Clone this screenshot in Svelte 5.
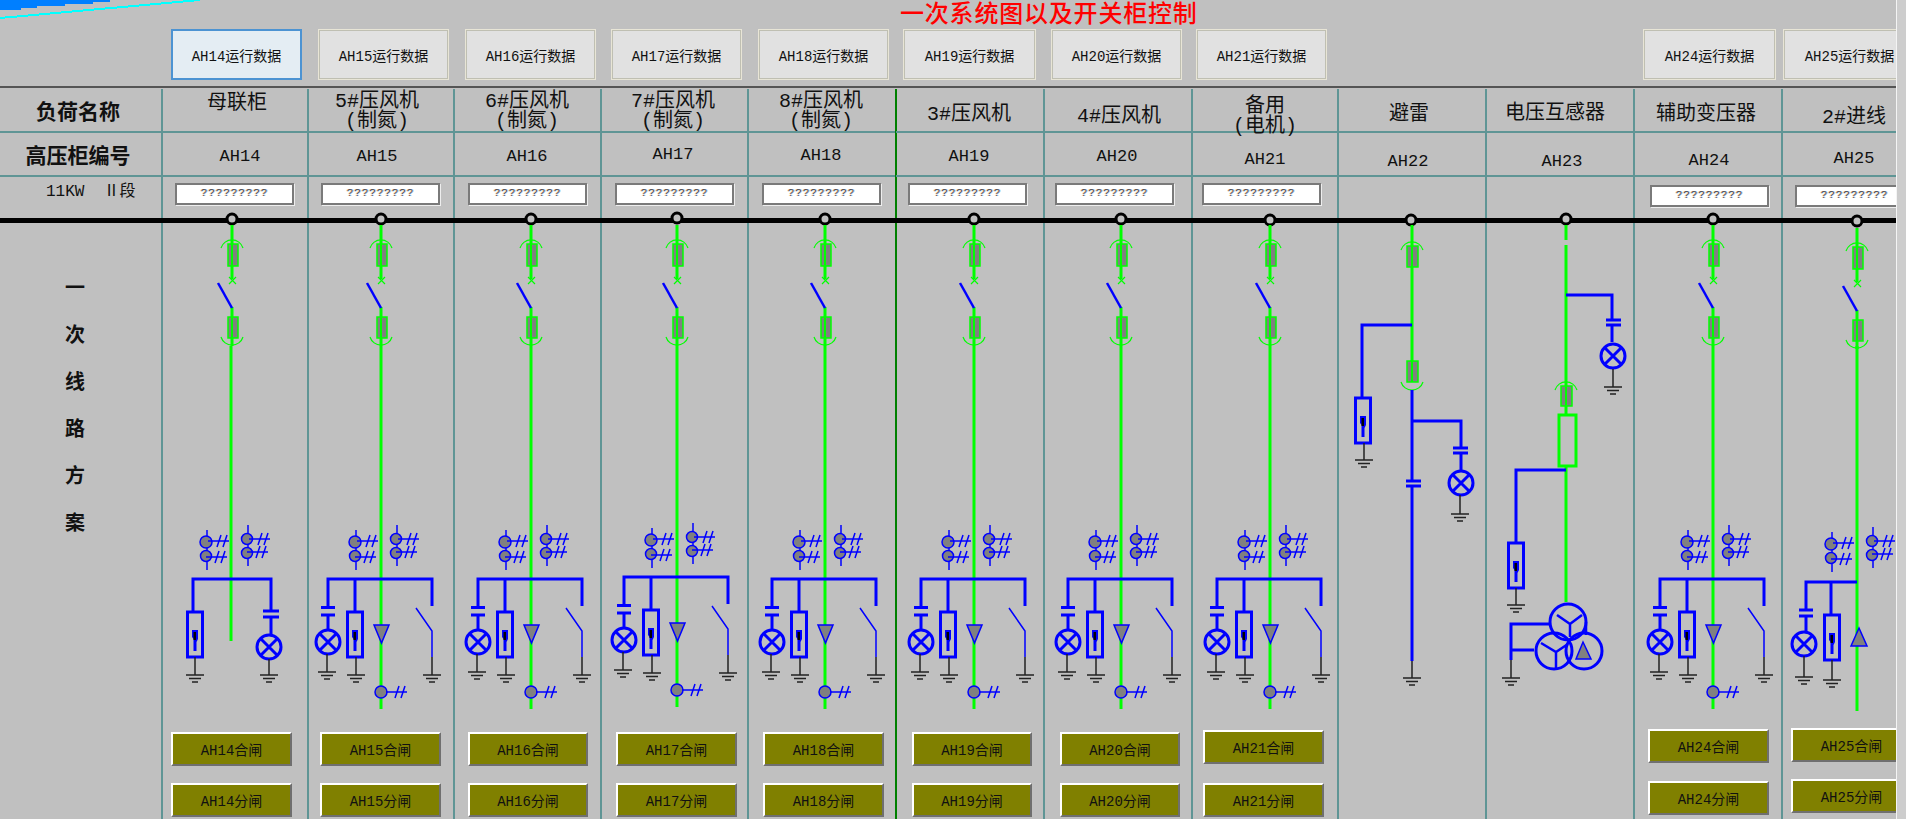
<script>
	// x = left edge of the column, all other positions are taken from the reference
	const rawCols = [
		{ id: 'AH14', x: 162, name: ['母联柜'], nameX: 237, nameY: 102, noX: 240, noY: 155, btn: 171, btnW: 131, box: 175, boxY: 183, ctl: 171, ctlW: 121, y1: 732, y2: 783 },
		{ id: 'AH15', x: 308, name: ['5#压风机', '(制氮)'], nameX: 377, nameY: 110, noX: 377, noY: 155, btn: 318, btnW: 131, box: 321, boxY: 183, ctl: 320, ctlW: 121, y1: 732, y2: 783 },
		{ id: 'AH16', x: 454, name: ['6#压风机', '(制氮)'], nameX: 527, nameY: 110, noX: 527, noY: 155, btn: 465, btnW: 131, box: 468, boxY: 183, ctl: 468, ctlW: 120, y1: 732, y2: 783 },
		{ id: 'AH17', x: 601, name: ['7#压风机', '(制氮)'], nameX: 673, nameY: 110, noX: 673, noY: 153, btn: 611, btnW: 131, box: 615, boxY: 183, ctl: 616, ctlW: 121, y1: 732, y2: 783 },
		{ id: 'AH18', x: 748, name: ['8#压风机', '(制氮)'], nameX: 821, nameY: 110, noX: 821, noY: 154, btn: 758, btnW: 131, box: 762, boxY: 183, ctl: 763, ctlW: 121, y1: 732, y2: 783 },
		{ id: 'AH19', x: 896, name: ['3#压风机'], nameX: 969, nameY: 113, noX: 969, noY: 155, btn: 903, btnW: 133, box: 908, boxY: 183, ctl: 912, ctlW: 120, y1: 732, y2: 783 },
		{ id: 'AH20', x: 1044, name: ['4#压风机'], nameX: 1119, nameY: 115, noX: 1117, noY: 155, btn: 1051, btnW: 131, box: 1055, boxY: 183, ctl: 1060, ctlW: 120, y1: 732, y2: 783 },
		{ id: 'AH21', x: 1192, name: ['备用', '(电机)'], nameX: 1265, nameY: 115, noX: 1265, noY: 158, btn: 1196, btnW: 131, box: 1202, boxY: 183, ctl: 1203, ctlW: 121, y1: 730, y2: 783 },
		{ id: 'AH22', x: 1338, name: ['避雷'], nameX: 1409, nameY: 113, noX: 1408, noY: 160 },
		{ id: 'AH23', x: 1486, name: ['电压互感器'], nameX: 1555, nameY: 112, noX: 1562, noY: 160 },
		{ id: 'AH24', x: 1634, name: ['辅助变压器'], nameX: 1706, nameY: 113, noX: 1709, noY: 159, btn: 1643, btnW: 133, box: 1650, boxY: 185, ctl: 1648, ctlW: 121, y1: 729, y2: 781 },
		{ id: 'AH25', x: 1782, name: ['2#进线'], nameX: 1854, nameY: 116, noX: 1854, noY: 157, btn: 1783, btnW: 133, box: 1795, boxY: 185, ctl: 1791, ctlW: 121, y1: 728, y2: 779 }
	];

	const cols = rawCols.map((c, i) => ({
		...c,
		w: (rawCols[i + 1] ? rawCols[i + 1].x : 1896) - c.x
	}));
	const gridCols = `162px ${cols.map((c) => c.w + 'px').join(' ')}`;

	// standard feeder cabinets, main = x of the busbar drop
	const feeders = [
		{ main: 381, cy: 219, dy: 0 },
		{ main: 531, cy: 219, dy: 0 },
		{ main: 677, cy: 218, dy: -2 },
		{ main: 825, cy: 219, dy: 0 },
		{ main: 974, cy: 219, dy: 0 },
		{ main: 1121, cy: 219, dy: 0 },
		{ main: 1270, cy: 220, dy: 0 },
		{ main: 1713, cy: 219, dy: 0 }
	];

	const planChars = ['一', '次', '线', '路', '方', '案'];
</script>

<div class="page">
	<div class="sheet">
		<header class="top">
			<h1 class="title">一次系统图以及开关柜控制</h1>
			<div class="run-row" style="grid-template-columns: {gridCols}">
				<div></div>
				{#each cols as c, i}
					<div>
						{#if c.btn}
							<button
								class="run-btn"
								class:active={i === 0}
								style="margin-left: {c.btn - c.x}px; width: {c.btnW}px"
							>{c.id}运行数据</button>
						{/if}
					</div>
				{/each}
			</div>
		</header>

		<div class="table" style="grid-template-columns: {gridCols}">
			<section class="col head-col">
				<div class="cell name-cell"><strong>负荷名称</strong></div>
				<div class="cell no-cell"><strong>高压柜编号</strong></div>
				<div class="segment">11KW&nbsp;&nbsp;Ⅱ段</div>
				<div class="plan">
					{#each planChars as ch}
						<span>{ch}</span>
					{/each}
				</div>
			</section>

			{#each cols as c}
				<section class="col" class:green-line={c.id === 'AH19'}>
					<div class="cell name-cell">
						<div
							class="name"
							style="margin-left: {2 * (c.nameX - c.x) - c.w}px; margin-top: {2 * (c.nameY - 108)}px"
						>
							{#each c.name as line}
								<div>{line}</div>
							{/each}
						</div>
					</div>
					<div class="cell no-cell">
						<span
							class="no"
							style="margin-left: {2 * (c.noX - c.x) - c.w}px; margin-top: {2 * (c.noY - 153)}px"
						>{c.id}</span>
					</div>
					<div class="box-cell">
						{#if c.box}
							<div class="box" style="margin-left: {c.box - c.x}px; margin-top: {c.boxY - 177}px">?????????</div>
						{/if}
					</div>
					{#if c.ctl}
						<div
							class="ctrl"
							style="padding-left: {c.ctl - c.x}px; gap: {c.y2 - c.y1 - 34}px; padding-bottom: {819 - c.y2 - 34}px"
						>
							<button class="ctl-btn" style="width: {c.ctlW}px">{c.id}合闸</button>
							<button class="ctl-btn" style="width: {c.ctlW}px">{c.id}分闸</button>
						</div>
					{/if}
				</section>
			{/each}
		</div>

		<!-- the wiring is a free canvas on top of the table -->
		<svg class="wiring" width="1896" height="819" viewBox="0 0 1896 819">
			<defs>
				<g id="ground">
					<path class="earth" d="M-9 0H9M-6 3.5H6M-3 7H3" />
				</g>
				<g id="lamp">
					<circle class="blue" r="12" />
					<path class="blue" d="M-8 -8L8 8M8 -8L-8 8" />
				</g>
				<g id="tail">
					<path class="thin" d="M0 0H21M9 6L13 -6M15 6L19 -6" />
				</g>
				<g id="arrester">
					<rect class="blue" x="-7.5" y="0" width="15" height="45" />
					<path d="M-3 18H3V27L1.5 30V39H-1.5V27L-3 25Z" fill="#0000ff" />
					<rect x="-1.5" y="20" width="2.5" height="8" fill="#000" />
				</g>
				<g id="head">
					<path class="green" d="M0 225V279M0 307V346" />
					<rect class="fuse" x="-4" y="244" width="10" height="22" />
					<path class="green-thin" d="M0 244V266" />
					<path class="green-arc" d="M-11 248A11.5 11.5 0 0 1 11 248" />
					<path class="green-arc" d="M-3 277L4 284M4 277L-3 284" />
					<rect class="fuse" x="-4" y="317" width="10" height="21" />
					<path class="green-thin" d="M0 317V338" />
					<path class="green-arc" d="M-11 337A11.5 11.5 0 0 0 11 337" />
					<path class="blue-blade" d="M-14 283L0 308" />
				</g>
				<g id="cts">
					<path class="thin" d="M-25 530V570M16 525V566" />
					<circle class="bulb" cx="-26" cy="542" r="6" />
					<circle class="bulb" cx="-26" cy="556" r="5.5" />
					<circle class="bulb" cx="15" cy="539" r="5.5" />
					<circle class="bulb" cx="15" cy="553" r="5.5" />
					<use href="#tail" x="-24" y="541" />
					<use href="#tail" x="-26" y="557" />
					<use href="#tail" x="17" y="539" />
					<use href="#tail" x="15" y="552" />
				</g>
				<g id="lower">
					<path class="blue" d="M-53 607V579H51V606" />
					<path class="blue" d="M-26 579V612M-60 607.5H-46M-60 615H-46M-53 615V630" />
					<use href="#lamp" x="-53" y="642" />
					<path class="earth" d="M-54 654V672" />
					<use href="#ground" x="-54" y="672" />
					<use href="#arrester" x="-26" y="612" />
					<path class="earth" d="M-25 657V675" />
					<use href="#ground" x="-25" y="675" />
					<path class="tri" d="M-7 625H8L0.5 643Z" />
					<path class="thin" d="M35 608L51 631V657" />
					<path class="earth" d="M51 657V675" />
					<use href="#ground" x="51" y="675" />
				</g>
			</defs>

			<path class="corner" d="M0 0H110V2H93V4H65V6H37V8H21V10H0Z" />
			<path class="cyan" d="M0 18L200 0" />

			<rect x="0" y="218" width="1896" height="5" fill="#000" />

			{#each feeders as f}
				<circle class="node" cx={f.main} cy={f.cy} r="5" />
				<use href="#head" x={f.main} y="0" />
				<use href="#cts" x={f.main} y={f.dy} />
				<path class="green" d="M{f.main} 346V{709 + f.dy}" />
				<use href="#lower" x={f.main} y={f.dy} />
				<circle class="bulb" cx={f.main} cy={692 + f.dy} r="6" />
				<use href="#tail" x={f.main + 5} y={692 + f.dy} />
			{/each}

			<!-- AH14 -->
			<circle class="node" cx="232" cy="219" r="5" />
			<use href="#head" x="232" y="0" />
			<use href="#cts" x="232" y="0" />
			<path class="green" d="M231 346V641" />
			<path class="blue" d="M193 612V579H271V611M263 611H279M263 617H279M271 617V635" />
			<use href="#arrester" x="195" y="612" />
			<path class="earth" d="M195 657V675" />
			<use href="#ground" x="195" y="675" />
			<use href="#lamp" x="269" y="647" />
			<path class="earth" d="M269 659V675" />
			<use href="#ground" x="269" y="675" />

			<!-- AH22 lightning arrester -->
			<circle class="node" cx="1411" cy="220" r="5" />
			<path class="green" d="M1412 225V361" />
			<rect class="fuse" x="1407" y="246" width="11" height="21" />
			<path class="green-thin" d="M1412 246V267" />
			<path class="green-arc" d="M1401 250A11.5 11.5 0 0 1 1423 250" />
			<rect class="fuse" x="1407" y="361" width="11" height="21" />
			<path class="green-thin" d="M1412 361V382" />
			<path class="green-arc" d="M1401 382A11.5 11.5 0 0 0 1423 382" />
			<path class="blue" d="M1412 325H1362V398M1412 390V481M1412 486V661M1406 481H1421M1406 486H1421" />
			<use href="#arrester" x="1363" y="398" />
			<path class="earth" d="M1364 443V460" />
			<use href="#ground" x="1364" y="460" />
			<path class="earth" d="M1412 661V678" />
			<use href="#ground" x="1412" y="678" />
			<path class="blue" d="M1412 421H1461V448M1453 448H1468M1453 453H1468M1461 453V470" />
			<use href="#lamp" x="1461" y="483" />
			<path class="earth" d="M1460 495V514" />
			<use href="#ground" x="1460" y="514" />

			<!-- AH23 voltage transformer -->
			<circle class="node" cx="1566" cy="219" r="5" />
			<path class="green" d="M1566 225V240M1566 245V415M1566 466V602" />
			<rect class="fuse" x="1561" y="386" width="11" height="20" />
			<path class="green-thin" d="M1566 386V406" />
			<path class="green-arc" d="M1555 390A11.5 11.5 0 0 1 1577 390" />
			<rect class="resistor" x="1559" y="415" width="17" height="51" />
			<path class="blue" d="M1566 295H1612V320M1606 320H1621M1606 325H1621M1612 325V342" />
			<use href="#lamp" x="1613" y="356" />
			<path class="earth" d="M1613 369V387" />
			<use href="#ground" x="1613" y="387" />
			<path class="blue" d="M1566 470H1516V543" />
			<use href="#arrester" x="1516" y="543" />
			<path class="earth" d="M1516 588V605" />
			<use href="#ground" x="1516" y="605" />
			<circle class="blue" cx="1568" cy="622" r="18" />
			<circle class="blue" cx="1554" cy="651" r="18" />
			<circle class="blue" cx="1584" cy="651" r="18" />
			<path class="blue-mid" d="M1557 615L1570 624L1582 615M1570 624V637M1541 643L1556 652L1568 644M1556 652V669M1586 622V635" />
			<path class="tri" d="M1583 642L1591 659H1576Z" />
			<path class="blue" d="M1549 624H1511V660M1511 650H1534" />
			<path class="earth" d="M1511 660V678" />
			<use href="#ground" x="1511" y="678" />

			<!-- AH25 incoming line -->
			<circle class="node" cx="1857" cy="221" r="5" />
			<use href="#head" x="1857" y="3" />
			<use href="#cts" x="1857" y="2" />
			<path class="green" d="M1857 346V711" />
			<path class="blue" d="M1857 582H1806V610M1799 610H1813M1799 616H1813M1806 616V632M1831 582V615" />
			<use href="#lamp" x="1804" y="644" />
			<path class="earth" d="M1804 656V677" />
			<use href="#ground" x="1804" y="677" />
			<use href="#arrester" x="1832" y="615" />
			<path class="earth" d="M1832 660V680" />
			<use href="#ground" x="1832" y="680" />
			<path class="tri" d="M1859 628L1867 646H1851Z" />
		</svg>
	</div>
	<div class="edge"></div>
</div>

<style>
	:global(body) {
		margin: 0;
		background: #c0c0c0;
	}

	.page {
		display: flex;
		width: 1906px;
		height: 819px;
		overflow: hidden;
		background: #c0c0c0;
	}

	.sheet {
		position: relative;
		flex: 0 0 1896px;
		height: 819px;
		overflow: hidden;
		font-family: 'Liberation Mono', 'Noto Sans CJK SC', monospace;
		color: #111;
	}

	.edge {
		flex: 1;
		background: #cdcdcd;
		border-left: 1px solid #f4f4f4;
	}

	.top {
		height: 86px;
		border-bottom: 2px solid #555;
	}

	.title {
		margin: 0;
		height: 29px;
		padding-left: 900px;
		font-family: 'Noto Sans CJK SC', sans-serif;
		font-size: 24px;
		font-weight: 500;
		line-height: 24px;
		letter-spacing: 0.8px;
		color: #ff0000;
		white-space: nowrap;
	}

	.run-row {
		display: grid;
	}

	.run-btn {
		display: block;
		height: 51px;
		padding: 0;
		box-sizing: border-box;
		border: 2px solid #bfbfb2;
		outline: 1px solid #e8e5d6;
		outline-offset: -1px;
		background: #e1e1e1;
		font-family: inherit;
		font-size: 14px;
		color: #111;
		white-space: nowrap;
	}

	.run-btn.active {
		border-color: #4c93d2;
		outline: none;
		background: #e4edf3;
	}

	.table {
		display: grid;
		height: 731px;
	}

	/* drawn with shadows so the 2px rule doesn't push the content */
	.col {
		--rule: #5f9595;
		display: flex;
		flex-direction: column;
		min-width: 0;
		margin-top: 1px;
		box-shadow: -1px 0 0 var(--rule), inset 1px 0 0 var(--rule);
	}

	.col.green-line {
		--rule: #008000;
	}

	.head-col {
		box-shadow: none;
	}

	.cell {
		display: flex;
		align-items: center;
		justify-content: center;
		height: 44px;
		box-sizing: border-box;
		border-bottom: 2px solid #5f9595;
		white-space: nowrap;
	}

	.head-col strong {
		font-family: 'Noto Sans CJK SC', sans-serif;
		font-size: 21px;
		font-weight: 700;
	}

	.head-col .cell {
		padding-right: 6px;
	}

	.name {
		font-size: 20px;
		line-height: 20px;
		text-align: center;
	}

	.no {
		font-size: 17px;
	}

	.segment {
		height: 30px;
		padding-left: 46px;
		font-size: 16px;
		line-height: 30px;
		white-space: nowrap;
	}

	.box-cell {
		height: 36px;
	}

	.box {
		width: 119px;
		height: 22px;
		box-sizing: border-box;
		border: 2px solid #7a7a7a;
		box-shadow: 1px 1px 0 #eee;
		background: #fff;
		font-size: 11px;
		line-height: 17px;
		letter-spacing: 0.9px;
		text-align: center;
		color: #444;
		text-shadow: 1px 0 rgba(70, 140, 230, 0.45), -1px 0 rgba(230, 150, 60, 0.45);
	}

	.plan {
		display: flex;
		flex-direction: column;
		align-items: center;
		gap: 20px;
		padding: 66px 12px 0 0;
		font-family: 'Noto Sans CJK SC', sans-serif;
		font-size: 20px;
		font-weight: 700;
		line-height: 27px;
	}

	.ctrl {
		display: flex;
		flex-direction: column;
		align-items: flex-start;
		margin-top: auto;
	}

	.ctl-btn {
		display: block;
		height: 34px;
		padding: 0;
		box-sizing: border-box;
		border: 2px solid;
		border-color: #fff #6f6f6f #6f6f6f #fff;
		background: #808000;
		font-family: inherit;
		font-size: 14px;
		color: #111;
		white-space: nowrap;
	}

	.wiring {
		position: absolute;
		left: 0;
		top: 0;
		pointer-events: none;
		fill: none;
	}

	.corner {
		fill: #007fff;
	}

	.cyan {
		stroke: #00ffff;
		stroke-width: 2;
		shape-rendering: crispEdges;
	}

	.node {
		fill: #c0c0c0;
		stroke: #000;
		stroke-width: 3;
	}

	.green {
		stroke: #00ff00;
		stroke-width: 3;
	}

	.green-thin {
		stroke: #00ff00;
		stroke-width: 2;
	}

	.green-arc {
		stroke: #00ff00;
		stroke-width: 1.2;
	}

	.fuse {
		fill: #808080;
		stroke: #00ff00;
		stroke-width: 1.5;
	}

	.resistor {
		stroke: #00ff00;
		stroke-width: 3;
	}

	.blue {
		stroke: #0000ff;
		stroke-width: 3;
	}

	.blue-mid,
	.blue-blade {
		stroke: #0000ff;
		stroke-width: 2.5;
	}

	.thin {
		stroke: #0000ff;
		stroke-width: 1.5;
	}

	.earth {
		stroke: #222;
		stroke-width: 1.5;
	}

	.bulb,
	.tri {
		fill: #808080;
		stroke: #0000ff;
		stroke-width: 1.5;
	}
</style>
